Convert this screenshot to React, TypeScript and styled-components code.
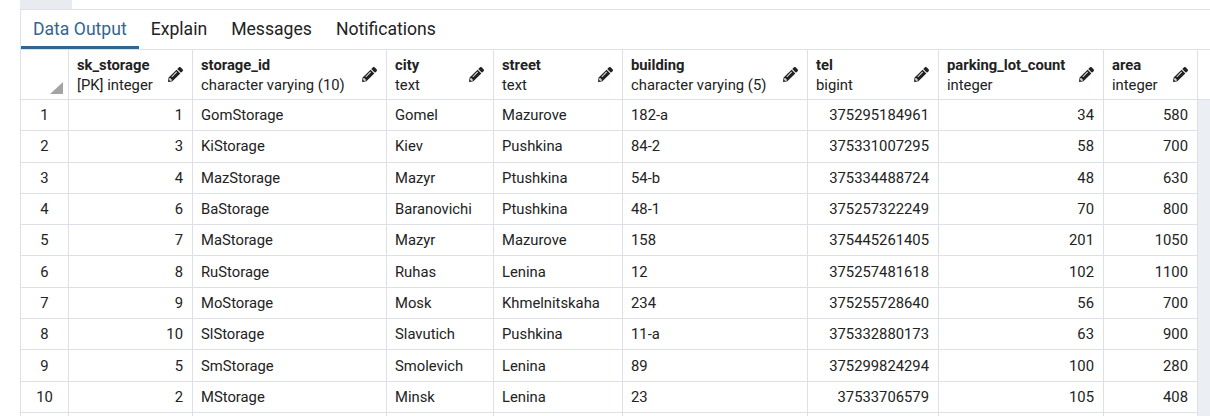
import React from "react";
import styled, { createGlobalStyle } from "styled-components";
import { FaPencilAlt } from "react-icons/fa";

const Global = createGlobalStyle`
  html, body { margin: 0; padding: 0; background: #fff; overflow: hidden; }
  body { font-family: Roboto, "Liberation Sans", sans-serif; color: #222; }
`;

const BORDER = "#dde0e6";

type Col = { name: string; type: string; width: number; align: "left" | "right" };

const cols: Col[] = [
  { name: "sk_storage", type: "[PK] integer", width: 124, align: "right" },
  { name: "storage_id", type: "character varying (10)", width: 194, align: "left" },
  { name: "city", type: "text", width: 107, align: "left" },
  { name: "street", type: "text", width: 129, align: "left" },
  { name: "building", type: "character varying (5)", width: 185, align: "left" },
  { name: "tel", type: "bigint", width: 131, align: "right" },
  { name: "parking_lot_count", type: "integer", width: 165, align: "right" },
  { name: "area", type: "integer", width: 94, align: "right" },
];

const rows: string[][] = [
  ["1", "GomStorage", "Gomel", "Mazurove", "182-a", "375295184961", "34", "580"],
  ["3", "KiStorage", "Kiev", "Pushkina", "84-2", "375331007295", "58", "700"],
  ["4", "MazStorage", "Mazyr", "Ptushkina", "54-b", "375334488724", "48", "630"],
  ["6", "BaStorage", "Baranovichi", "Ptushkina", "48-1", "375257322249", "70", "800"],
  ["7", "MaStorage", "Mazyr", "Mazurove", "158", "375445261405", "201", "1050"],
  ["8", "RuStorage", "Ruhas", "Lenina", "12", "375257481618", "102", "1100"],
  ["9", "MoStorage", "Mosk", "Khmelnitskaha", "234", "375255728640", "56", "700"],
  ["10", "SlStorage", "Slavutich", "Pushkina", "11-a", "375332880173", "63", "900"],
  ["5", "SmStorage", "Smolevich", "Lenina", "89", "375299824294", "100", "280"],
  ["2", "MStorage", "Minsk", "Lenina", "23", "37533706579", "105", "408"],
  ["", "", "", "", "", "", "", ""],
];

const Page = styled.div`
  padding-left: 20px;
  height: 416px;
  overflow: hidden;
`;

const TopStrip = styled.div`
  height: 9px;
  display: flex;
`;

const GrayBlock = styled.div`
  width: 52px;
  background: #e8ebef;
`;

const Panel = styled.div`
  border-top: 1px solid ${BORDER};
  border-left: 1px solid ${BORDER};
  display: flex;
  flex-direction: column;
`;

const TabBar = styled.div`
  height: 39px;
  display: flex;
  align-items: stretch;
`;

const Tab = styled.div<{ $active?: boolean }>`
  padding: 0 12px;
  display: flex;
  align-items: center;
  font-size: 17.6px;
  color: ${(p) => (p.$active ? "#326690" : "#222")};
  border-bottom: 3px solid ${(p) => (p.$active ? "#326690" : "transparent")};
  padding-top: 1px;
  box-sizing: border-box;
`;

const Grid = styled.div`
  border-top: 1px solid ${BORDER};
  background: #ebeef2;
  flex: 1;
`;

const HeaderRow = styled.div`
  display: flex;
  height: 50px;
  box-sizing: border-box;
  background: #fff;
  border-bottom: 1px solid ${BORDER};
`;

const Row = styled.div`
  display: flex;
  height: 31.3px;
  box-sizing: border-box;
  width: max-content;
  background: #fff;
  border-bottom: 1px solid ${BORDER};
`;

const CornerCell = styled.div`
  width: 48px;
  flex: none;
  position: relative;
  border-right: 1px solid ${BORDER};
  box-sizing: border-box;
`;

const Triangle = styled.div`
  position: absolute;
  right: 5px;
  bottom: 5px;
  width: 0;
  height: 0;
  border-left: 13px solid transparent;
  border-bottom: 12px solid #a4a4a4;
`;

const HeadCell = styled.div<{ $w: number }>`
  width: ${(p) => p.$w}px;
  flex: none;
  box-sizing: border-box;
  border-right: 1px solid ${BORDER};
  padding: 5px 9px 0 8px;
  display: flex;
  align-items: flex-start;
  justify-content: space-between;
  font-size: 14.8px;
`;

const HeadText = styled.div`
  display: flex;
  flex-direction: column;
  line-height: 20px;
`;

const ColName = styled.span`
  font-weight: 700;
  color: #222;
`;

const ColType = styled.span`
  color: #222;
`;

const Pencil = styled.div`
  margin-top: 12px;
  display: flex;
  color: #222;
`;

const NumCell = styled.div`
  width: 48px;
  flex: none;
  box-sizing: border-box;
  border-right: 1px solid ${BORDER};
  display: flex;
  align-items: center;
  justify-content: center;
  font-size: 14.8px;
`;

const Cell = styled.div<{ $w: number; $align: "left" | "right" }>`
  width: ${(p) => p.$w}px;
  flex: none;
  box-sizing: border-box;
  border-right: 1px solid ${BORDER};
  display: flex;
  align-items: center;
  justify-content: ${(p) => (p.$align === "right" ? "flex-end" : "flex-start")};
  padding: 0 9px 0 8px;
  font-size: 14.8px;
  white-space: nowrap;
`;

export default function App() {
  return (
    <>
      <Global />
      <Page>
        <TopStrip>
          <GrayBlock />
        </TopStrip>
        <Panel>
          <TabBar>
            <Tab $active>Data Output</Tab>
            <Tab>Explain</Tab>
            <Tab>Messages</Tab>
            <Tab>Notifications</Tab>
          </TabBar>
          <Grid>
            <HeaderRow>
              <CornerCell>
                <Triangle />
              </CornerCell>
              {cols.map((c) => (
                <HeadCell key={c.name} $w={c.width}>
                  <HeadText>
                    <ColName>{c.name}</ColName>
                    <ColType>{c.type}</ColType>
                  </HeadText>
                  <Pencil>
                    <FaPencilAlt size={15} />
                  </Pencil>
                </HeadCell>
              ))}
            </HeaderRow>
            {rows.map((r, i) => (
              <Row key={i}>
                <NumCell>{i < 10 ? i + 1 : ""}</NumCell>
                {r.map((v, j) => (
                  <Cell key={j} $w={cols[j].width} $align={cols[j].align}>
                    {v}
                  </Cell>
                ))}
              </Row>
            ))}
          </Grid>
        </Panel>
      </Page>
    </>
  );
}
